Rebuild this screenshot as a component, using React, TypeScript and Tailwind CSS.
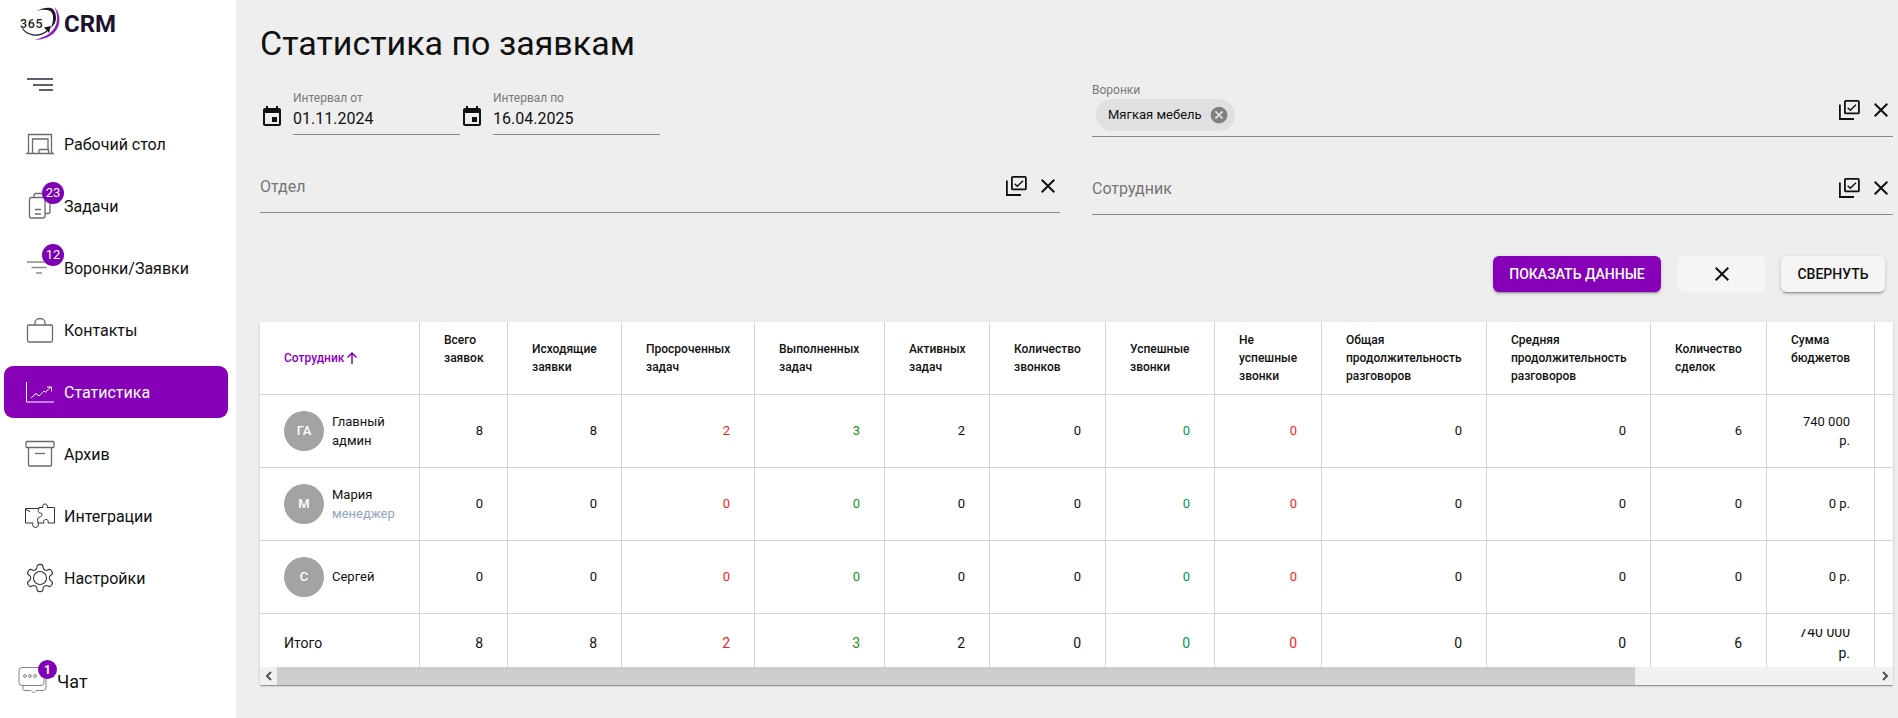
import * as React from "react";

const colWidths = [
  "w-[160px]",
  "w-[88px]",
  "w-[114px]",
  "w-[133px]",
  "w-[130px]",
  "w-[105px]",
  "w-[116px]",
  "w-[109px]",
  "w-[107px]",
  "w-[165px]",
  "w-[164px]",
  "w-[116px]",
  "w-[108px]",
  "w-[120px]",
];

const headers = [
  { title: "Всего заявок", spacer: true },
  { title: "Исходящие заявки" },
  { title: "Просроченных задач" },
  { title: "Выполненных задач" },
  { title: "Активных задач" },
  { title: "Количество звонков" },
  { title: "Успешные звонки" },
  { title: "Не успешные звонки" },
  { title: "Общая продолжительность разговоров" },
  { title: "Средняя продолжительность разговоров" },
  { title: "Количество сделок" },
  { title: "Сумма бюджетов", spacer: true },
];

// цвета значений по колонкам
const valueColors = [
  "text-[#111]",
  "text-[#111]",
  "text-[#ff1a1a]",
  "text-[#1b8f1b]",
  "text-[#111]",
  "text-[#111]",
  "text-[#00994d]",
  "text-[#ff1a2e]",
  "text-[#111]",
  "text-[#111]",
  "text-[#111]",
  "text-[#111]",
];

const rows = [
  { initials: "ГА", name: ["Главный", "админ"], values: ["8", "8", "2", "3", "2", "0", "0", "0", "0", "0", "6"], budget: ["740 000", "р."] },
  { initials: "М", name: ["Мария"], role: "менеджер", values: ["0", "0", "0", "0", "0", "0", "0", "0", "0", "0", "0"], budget: ["0 р."] },
  { initials: "С", name: ["Сергей"], values: ["0", "0", "0", "0", "0", "0", "0", "0", "0", "0", "0"], budget: ["0 р."] },
];

const totals = ["8", "8", "2", "3", "2", "0", "0", "0", "0", "0", "6"];

function BoardIcon() {
  return (
    <svg viewBox="0 0 30 30" className="h-[30px] w-[30px]" fill="none" stroke="#6a6a6a" strokeWidth="1.3">
      <path d="M3.5 24V5.5h23V24" />
      <path d="M7.5 24V10h15.5v10" />
      <path d="M14 24v-2.5a1 1 0 0 1 1-1h8.5V24" />
      <path d="M1 24.5h28" strokeWidth="1.5" />
    </svg>
  );
}

function TasksIcon() {
  return (
    <svg viewBox="0 0 30 30" className="h-[30px] w-[30px]" fill="none" stroke="#6a6a6a" strokeWidth="1.3">
      <rect x="4.5" y="6.5" width="15.5" height="20.5" rx="2" />
      <path d="M9 6.5V4a1.5 1.5 0 0 1 1.5-1.5h13A1.5 1.5 0 0 1 25 4v17a1.5 1.5 0 0 1-1.5 1.5H20" />
      <path d="M10 18.5h6M10 23h6" />
    </svg>
  );
}

function FunnelIcon() {
  return (
    <svg viewBox="0 0 30 30" className="h-[30px] w-[30px]" fill="none" stroke="#8a8a8a" strokeWidth="1.5">
      <path d="M2 9h21M6.5 14.5h15M11 20h6" />
    </svg>
  );
}

function BagIcon() {
  return (
    <svg viewBox="0 0 30 30" className="h-[30px] w-[30px]" fill="none" stroke="#6a6a6a" strokeWidth="1.3">
      <rect x="2.5" y="10" width="25" height="17" rx="1.5" />
      <path d="M10 10V7.5a5 4 0 0 1 10 0V10" />
    </svg>
  );
}

function ChartIcon() {
  return (
    <svg viewBox="0 0 30 30" className="h-[30px] w-[30px]" fill="none" stroke="#fff" strokeWidth="1">
      <path d="M1.5 5v20H29" />
      <path d="M6 21l5-4.500 3 2.500 5-5 1.500 1 5.500-5" />
      <path d="M22 10h4.500v4.500" />
    </svg>
  );
}

function ArchiveIcon() {
  return (
    <svg viewBox="0 0 30 30" className="h-[30px] w-[30px]" fill="none" stroke="#6a6a6a" strokeWidth="1.3">
      <rect x="1" y="2.5" width="28" height="6" rx="1" />
      <path d="M3.5 8.5V26a1 1 0 0 0 1 1h21a1 1 0 0 0 1-1V8.500" />
      <path d="M10 14.5h10" />
    </svg>
  );
}

function PuzzleIcon() {
  return (
    <svg viewBox="0 0 30 30" className="h-[30px] w-[30px]" fill="none" stroke="#333" strokeWidth="1">
      <path d="M.5 7.500H14V6.500h4C17 4.500 18 3 20 3s3 1.500 2 3.500h7.500V22H23c1-2-.5-4-2.500-3.500S18 20.500 19 22h-6c1 2 0 4.500-2.500 4.500S7 24 8 22H.5z" />
      <path d="M14 7.500c-1.500 2-1 4.500 1.500 4.500 1.500 0 2 1.500 1 3-1 1.500-3.500 1-4 3l.5 4" />
      <path d="M.5 7.500c1 3 4 1.500 4.500 3.500" />
    </svg>
  );
}

function GearIcon() {
  return (
    <svg viewBox="1 1 22 22" className="h-[30px] w-[30px]" fill="none" stroke="#333" strokeWidth="0.8">
      <path d="M12.22 2h-.44a2 2 0 0 0-2 2v.18a2 2 0 0 1-1 1.73l-.43.25a2 2 0 0 1-2 0l-.15-.08a2 2 0 0 0-2.73.73l-.22.38a2 2 0 0 0 .73 2.73l.15.1a2 2 0 0 1 1 1.72v.51a2 2 0 0 1-1 1.74l-.15.09a2 2 0 0 0-.73 2.73l.22.38a2 2 0 0 0 2.73.73l.15-.08a2 2 0 0 1 2 0l.43.25a2 2 0 0 1 1 1.73V20a2 2 0 0 0 2 2h.44a2 2 0 0 0 2-2v-.18a2 2 0 0 1 1-1.73l.43-.25a2 2 0 0 1 2 0l.15.08a2 2 0 0 0 2.73-.73l.22-.39a2 2 0 0 0-.73-2.73l-.15-.08a2 2 0 0 1-1-1.74v-.5a2 2 0 0 1 1-1.74l.15-.09a2 2 0 0 0 .73-2.73l-.22-.38a2 2 0 0 0-2.73-.73l-.15.08a2 2 0 0 1-2 0l-.43-.25a2 2 0 0 1-1-1.73V4a2 2 0 0 0-2-2z" />
      <circle cx="12" cy="12" r="4.800" />
    </svg>
  );
}

function ChatIcon() {
  return (
    <svg viewBox="0 2 30 28" className="h-[28px] w-[30px]" fill="none" stroke="#85808c" strokeWidth="1">
      <rect x="1" y="2.500" width="25" height="18" rx="3" />
      <path d="M5 20.500v3a2 2 0 0 0 2 2h6l2.500 2.500 2.500-2.500h7a3 3 0 0 0 3-3V9a3 3 0 0 0-3-3" />
      <circle cx="7" cy="11" r="1.400" />
      <circle cx="12" cy="11" r="1.400" />
      <circle cx="17" cy="11" r="1.400" />
    </svg>
  );
}

function Logo() {
  return (
    <div className="flex h-[48px] items-center pl-[14px]">
      <svg viewBox="14 4 48 40" className="h-[40px] w-[48px]" fill="none">
        <path d="M36 11C42 8 48 7 51 8C55 10 56 14 56 18C56 22 54 25 51 28C53 23 54 17 52 13C50 9 43 9 36 11Z" fill="#1e1428" />
        <path d="M22.500 28.500C27 35 38 38 47 31" stroke="#1e1428" strokeWidth="1.300" />
        <path d="M51 26L44 27.500L49 33Z" fill="#1e1428" />
        <path d="M54 7C60 12 61 22 57 29C53 36 44 40 34 40C43 38 51 34 55 27C58 21 58 13 54 7Z" fill="#8a1fc0" />
        <text x="20" y="27.500" fontSize="12.500" fontWeight="500" letterSpacing="0.7" fill="#222" fontFamily="Roboto, sans-serif">
          365
        </text>
      </svg>
      <span className="ml-[2px] text-[24px] font-bold text-[#1c1230]">CRM</span>
    </div>
  );
}

function Badge({ value }: { value: string }) {
  return (
    <span className="absolute left-[17px] top-[-9px] flex h-[22px] w-[22px] items-center justify-center rounded-full bg-[#7e00b5] text-[13px] text-white">
      {value}
    </span>
  );
}

function NavItem({
  icon,
  label,
  badge,
  active,
}: {
  icon: React.ReactNode;
  label: string;
  badge?: string;
  active?: boolean;
}) {
  return (
    <div
      className={
        active
          ? "mb-[10px] flex h-[52px] w-[224px] items-center gap-[9px] rounded-[9px] bg-[#8600b8] pl-[21px] text-white"
          : "mb-[10px] flex h-[52px] w-[224px] items-center gap-[9px] pl-[21px] text-[#111]"
      }
    >
      <span className="relative h-[30px] w-[30px]">
        {icon}
        {badge && <Badge value={badge} />}
      </span>
      <span className="pt-[2px] text-[16px]">{label}</span>
    </div>
  );
}

function CalendarIcon() {
  return (
    <svg viewBox="0 0 24 24" className="h-[24px] w-[24px]" fill="#111">
      <path d="M17 12h-5v5h5v-5zM16 1v2H8V1H6v2H5c-1.110 0-1.990.9-1.990 2L3 19c0 1.100.89 2 2 2h14c1.100 0 2-.9 2-2V5c0-1.100-.9-2-2-2h-1V1h-2zm3 18H5V8h14v11z" />
    </svg>
  );
}

function DateField({ label, value }: { label: string; value: string }) {
  return (
    <div className="flex w-[200px] items-start">
      <span className="mt-[14px] w-[33px]">
        <CalendarIcon />
      </span>
      <div className="h-[44px] w-[167px] border-b border-[#8a8a8a]">
        <div className="text-[12px] leading-[14px] text-[#7a7a7a]">{label}</div>
        <div className="mt-[2px] text-[16px] leading-[24px] text-[#111]">{value}</div>
      </div>
    </div>
  );
}

function CheckAllIcon() {
  return (
    <svg viewBox="0 0 24 24" className="h-[24px] w-[24px]" fill="none" stroke="#111">
      <rect x="7.900" y="2.900" width="14" height="12.500" rx="1" strokeWidth="1.800" />
      <path d="M2.900 6.500V21H17" strokeWidth="1.800" />
      <path d="M10.700 9.700l2.600 2.600L19 6.700" strokeWidth="1.400" />
    </svg>
  );
}

function CloseIcon() {
  return (
    <svg viewBox="0 0 24 24" className="h-[24px] w-[24px]" fill="#111">
      <path d="M19 6.410L17.590 5 12 10.590 6.410 5 5 6.410 10.590 12 5 17.590 6.410 19 12 13.410 17.590 19 19 17.590 13.410 12z" />
    </svg>
  );
}

function FieldActions() {
  return (
    <div className="flex gap-[8px]">
      <CheckAllIcon />
      <CloseIcon />
    </div>
  );
}

function SelectField({ label }: { label: string }) {
  return (
    <div className="flex h-[54px] items-center justify-between border-b border-[#8a8a8a]">
      <span className="pt-[2px] text-[16px] text-[#757575]">{label}</span>
      <FieldActions />
    </div>
  );
}

function Avatar({ initials }: { initials: string }) {
  return (
    <span className="flex h-[40px] w-[40px] shrink-0 items-center justify-center rounded-full bg-[#a3a3a3] text-[13px] font-medium text-white">
      {initials}
    </span>
  );
}

const cellBorder = "border-r border-b border-[#d4d4d4]";

function StatsTable() {
  return (
    <div className="h-[345px] overflow-hidden">
      <table className="w-[1733px] table-fixed border-separate border-spacing-0 bg-white text-[13px] leading-[19.500px] text-[#111]">
        <colgroup>
          {colWidths.map((w, i) => (
            <col key={i} className={w} />
          ))}
        </colgroup>
        <thead>
          <tr className="h-[73px]">
            <th className={`${cellBorder} px-6 text-left text-[12px] font-medium leading-[18px] text-[#8a00c2]`}>
              <span className="flex items-center gap-[2px]">
                Сотрудник
                <svg viewBox="0 0 12 14" className="h-[14px] w-[12px]" fill="none" stroke="#8a00c2" strokeWidth="1.500">
                  <path d="M6 13V2M1.500 6.500L6 2l4.500 4.500" />
                </svg>
              </span>
            </th>
            {headers.map((h) => (
              <th key={h.title} className={`${cellBorder} px-6 text-left text-[12px] font-medium leading-[18px]`}>
                {h.title}
                {h.spacer && <div className="h-[18px]" />}
              </th>
            ))}
            <th className={cellBorder} />
          </tr>
        </thead>
        <tbody>
          {rows.map((row) => (
            <tr key={row.initials} className="h-[73px]">
              <td className={`${cellBorder} px-6`}>
                <div className="flex items-center gap-[8px]">
                  <Avatar initials={row.initials} />
                  <div>
                    {row.name.map((n) => (
                      <div key={n}>{n}</div>
                    ))}
                    {row.role && <div className="text-[#90a4c0]">{row.role}</div>}
                  </div>
                </div>
              </td>
              {row.values.map((v, i) => (
                <td key={i} className={`${cellBorder} px-6 text-right ${valueColors[i]}`}>
                  {v}
                </td>
              ))}
              <td className={`${cellBorder} px-6 text-right`}>
                {row.budget.map((b) => (
                  <div key={b}>{b}</div>
                ))}
              </td>
              <td className={cellBorder} />
            </tr>
          ))}
          <tr className="h-[60px] text-[14px] leading-[21px]">
            <td className={`${cellBorder} px-6`}>Итого</td>
            {totals.map((v, i) => (
              <td key={i} className={`${cellBorder} px-6 text-right ${valueColors[i]}`}>
                {v}
              </td>
            ))}
            <td className={`${cellBorder} px-6 pb-[9px] align-bottom text-right`}>
              <div className="flex h-[35px] flex-col justify-end overflow-hidden">
                <div className="shrink-0">740 000</div>
                <div className="shrink-0">р.</div>
              </div>
            </td>
            <td className={cellBorder} />
          </tr>
        </tbody>
      </table>
    </div>
  );
}

function ScrollBar() {
  return (
    <div className="flex h-[18px] bg-[#f1f1f1]">
      <span className="flex w-[17px] items-center justify-center">
        <svg viewBox="0 0 8 10" className="h-[10px] w-[8px]" fill="none" stroke="#505050" strokeWidth="2">
          <path d="M6 1L2 5l4 4" />
        </svg>
      </span>
      <span className="w-[1358px] bg-[#cdcdcd]" />
      <span className="flex-1" />
      <span className="flex w-[17px] items-center justify-center">
        <svg viewBox="0 0 8 10" className="h-[10px] w-[8px]" fill="none" stroke="#505050" strokeWidth="2">
          <path d="M2 1l4 4-4 4" />
        </svg>
      </span>
    </div>
  );
}

export default function App() {
  return (
    <div className="flex h-[718px] w-full overflow-hidden bg-[#eeeeee] font-['Roboto',sans-serif]">
      <aside className="flex w-[236px] shrink-0 flex-col bg-white">
        <Logo />
        <div className="ml-[27px] mt-[30px] flex h-[13px] w-[26px] flex-col items-end justify-between">
          <span className="h-[2px] w-[26px] bg-[#665a6e]" />
          <span className="h-[2px] w-[20px] bg-[#665a6e]" />
          <span className="h-[2px] w-[14px] bg-[#665a6e]" />
        </div>
        <nav className="ml-[4px] mt-[27px]">
          <NavItem icon={<BoardIcon />} label="Рабочий стол" />
          <NavItem icon={<TasksIcon />} label="Задачи" badge="23" />
          <NavItem icon={<FunnelIcon />} label="Воронки/Заявки" badge="12" />
          <NavItem icon={<BagIcon />} label="Контакты" />
          <NavItem icon={<ChartIcon />} label="Статистика" active />
          <NavItem icon={<ArchiveIcon />} label="Архив" />
          <NavItem icon={<PuzzleIcon />} label="Интеграции" />
          <NavItem icon={<GearIcon />} label="Настройки" />
        </nav>
        <div className="ml-[18px] mt-[53px] flex items-center">
          <span className="relative h-[28px] w-[30px]">
            <ChatIcon />
            <span className="absolute left-[20px] top-[-7px] flex h-[19px] w-[19px] items-center justify-center rounded-full bg-[#7e00b5] text-[12px] font-bold text-white">
              1
            </span>
          </span>
          <span className="ml-[9px] text-[18px] text-[#111]">Чат</span>
        </div>
      </aside>

      <main className="min-w-0 flex-1 pl-6 pr-[5px]">
        <h1 className="pt-[23px] text-[34px] font-normal leading-[40px] text-[#111]">
          Статистика по заявкам
        </h1>

        <div className="mt-[20px] grid grid-cols-[800px_1fr] gap-x-8">
          <div className="flex pt-[8px]">
            <DateField label="Интервал от" value="01.11.2024" />
            <DateField label="Интервал по" value="16.04.2025" />
          </div>
          <div className="flex h-[54px] items-start justify-between border-b border-[#8a8a8a]">
            <div>
              <div className="text-[12px] leading-[14px] text-[#7a7a7a]">Воронки</div>
              <div className="ml-[4px] mt-[2px] flex h-[32px] w-[139px] items-center rounded-full bg-[#e0e0e0] pl-[12px] text-[13px] text-[#111]">
                Мягкая мебель
                <svg viewBox="0 0 24 24" className="ml-[7px] h-[20px] w-[20px]" fill="#808080">
                  <path d="M12 2C6.470 2 2 6.470 2 12s4.470 10 10 10 10-4.470 10-10S17.530 2 12 2zm5 13.590L15.590 17 12 13.410 8.410 17 7 15.590 10.590 12 7 8.410 8.410 7 12 10.590 15.590 7 17 8.410 13.410 12 17 15.590z" />
                </svg>
              </div>
            </div>
            <div className="mt-[15px]">
              <FieldActions />
            </div>
          </div>
          <div className="mt-[22px]">
            <SelectField label="Отдел" />
          </div>
          <div className="mt-[24px]">
            <SelectField label="Сотрудник" />
          </div>
        </div>

        <div className="mt-[41px] flex justify-end gap-4 pr-[8px]">
          <button className="mr-[1px] h-[36px] w-[168px] rounded-[6px] bg-[#8600b8] text-[14px] font-medium text-white shadow-[0_3px_1px_-2px_rgba(0,0,0,0.2),0_2px_2px_0_rgba(0,0,0,0.14),0_1px_5px_0_rgba(0,0,0,0.12)]">
            ПОКАЗАТЬ ДАННЫЕ
          </button>
          <button className="flex h-[36px] w-[87px] items-center justify-center rounded-[6px] bg-[#f5f5f5]">
            <CloseIcon />
          </button>
          <button className="h-[36px] w-[104px] rounded-[6px] bg-[#f5f5f5] text-[14px] font-medium text-[#111] shadow-[0_3px_1px_-2px_rgba(0,0,0,0.2),0_2px_2px_0_rgba(0,0,0,0.14),0_1px_5px_0_rgba(0,0,0,0.12)]">
            СВЕРНУТЬ
          </button>
        </div>

        <div className="mt-[30px] overflow-hidden bg-white shadow-[0_2px_1px_-1px_rgba(0,0,0,0.2),0_1px_1px_0_rgba(0,0,0,0.14),0_1px_3px_0_rgba(0,0,0,0.12)]">
          <StatsTable />
          <ScrollBar />
        </div>
      </main>
    </div>
  );
}
